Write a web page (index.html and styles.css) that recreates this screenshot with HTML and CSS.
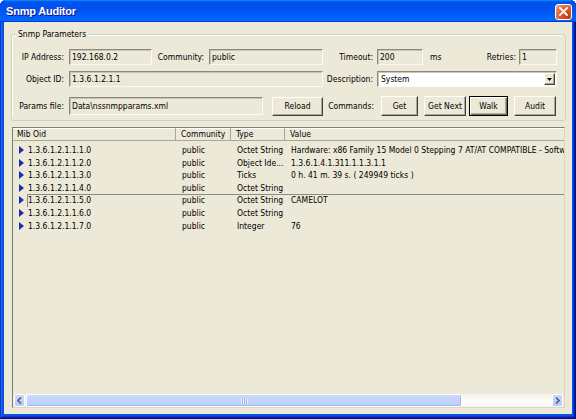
FILE: index.html
```html
<!DOCTYPE html>
<html>
<head>
<meta charset="utf-8">
<title>Snmp Auditor</title>
<link rel="stylesheet" href="styles.css">
</head>
<body>
<div class="window">
  <div class="titlebar">
    <span class="title">Snmp Auditor</span>
    <span class="close"><svg width="9" height="9" viewBox="0 0 9 9"><path d="M1 1 L8 8 M8 1 L1 8" stroke="#fff" stroke-width="1.8" stroke-linecap="square"/></svg></span>
  </div>
  <div class="client">
    <div class="group">
      <span class="legend">Snmp Parameters</span>
      <div class="frow">
        <span class="lbl w57">IP Address:</span>
        <div class="field f-ip">192.168.0.2</div>
        <span class="lbl w57">Community:</span>
        <div class="field f-comm">public</div>
        <span class="lbl w54">Timeout:</span>
        <div class="field f-time">200</div>
        <span class="unit">ms</span>
        <span class="lbl w76">Retries:</span>
        <div class="field f-ret">1</div>
      </div>
      <div class="frow r2">
        <span class="lbl w57">Object ID:</span>
        <div class="field f-oid">1.3.6.1.2.1.1</div>
        <span class="lbl w54">Description:</span>
        <div class="select">
          <span class="sel-text">System</span>
          <span class="dd"><svg width="5" height="3" viewBox="0 0 5 3"><path d="M0 0 H5 L2.5 3 Z" fill="#000"/></svg></span>
        </div>
      </div>
      <div class="frow r3">
        <span class="lbl w57">Params file:</span>
        <div class="field f-params">Data\nssnmpparams.xml</div>
        <button class="btn b-reload">Reload</button>
        <span class="lbl w57 cmd">Commands:</span>
        <button class="btn b-get">Get</button>
        <button class="btn b-next">Get Next</button>
        <button class="btn b-walk default">Walk</button>
        <button class="btn b-audit">Audit</button>
      </div>
    </div>

    <div class="list">
      <div class="hdr">
        <div class="hc c-oid">Mib Oid</div>
        <div class="hc c-comm">Community</div>
        <div class="hc c-type">Type</div>
        <div class="hc c-val">Value</div>
      </div>
      <div class="rows">
        <div class="row"><span class="mark"><svg width="5" height="8" viewBox="0 0 5 8"><path d="M0 0 L5 4 L0 8 Z" fill="#1a2fb0"/></svg></span><div class="sel"><span class="c c1">1.3.6.1.2.1.1.1.0</span><span class="c c2">public</span><span class="c c3">Octet String</span><span class="c c4">Hardware: x86 Family 15 Model 0 Stepping 7 AT/AT COMPATIBLE - Software: Windows 2000 Version 5.1</span></div></div>
        <div class="row"><span class="mark"><svg width="5" height="8" viewBox="0 0 5 8"><path d="M0 0 L5 4 L0 8 Z" fill="#1a2fb0"/></svg></span><div class="sel"><span class="c c1">1.3.6.1.2.1.1.2.0</span><span class="c c2">public</span><span class="c c3">Object Ide...</span><span class="c c4">1.3.6.1.4.1.311.1.1.3.1.1</span></div></div>
        <div class="row"><span class="mark"><svg width="5" height="8" viewBox="0 0 5 8"><path d="M0 0 L5 4 L0 8 Z" fill="#1a2fb0"/></svg></span><div class="sel"><span class="c c1">1.3.6.1.2.1.1.3.0</span><span class="c c2">public</span><span class="c c3">Ticks</span><span class="c c4">0 h. 41 m. 39 s. ( 249949 ticks )</span></div></div>
        <div class="row"><span class="mark"><svg width="5" height="8" viewBox="0 0 5 8"><path d="M0 0 L5 4 L0 8 Z" fill="#1a2fb0"/></svg></span><div class="sel"><span class="c c1">1.3.6.1.2.1.1.4.0</span><span class="c c2">public</span><span class="c c3">Octet String</span><span class="c c4"></span></div></div>
        <div class="row focus"><span class="mark"><svg width="5" height="8" viewBox="0 0 5 8"><path d="M0 0 L5 4 L0 8 Z" fill="#1a2fb0"/></svg></span><div class="sel"><span class="c c1">1.3.6.1.2.1.1.5.0</span><span class="c c2">public</span><span class="c c3">Octet String</span><span class="c c4">CAMELOT</span></div></div>
        <div class="row"><span class="mark"><svg width="5" height="8" viewBox="0 0 5 8"><path d="M0 0 L5 4 L0 8 Z" fill="#1a2fb0"/></svg></span><div class="sel"><span class="c c1">1.3.6.1.2.1.1.6.0</span><span class="c c2">public</span><span class="c c3">Octet String</span><span class="c c4"></span></div></div>
        <div class="row"><span class="mark"><svg width="5" height="8" viewBox="0 0 5 8"><path d="M0 0 L5 4 L0 8 Z" fill="#1a2fb0"/></svg></span><div class="sel"><span class="c c1">1.3.6.1.2.1.1.7.0</span><span class="c c2">public</span><span class="c c3">Integer</span><span class="c c4">76</span></div></div>
      </div>
      <div class="hscroll">
        <span class="sb-arrow"><svg width="5" height="7" viewBox="0 0 5 7"><path d="M4 0.5 L1 3.5 L4 6.5" fill="none" stroke="#4d6185" stroke-width="1.6"/></svg></span>
        <span class="sb-thumb"><span class="grip"></span></span>
        <span class="sb-track"></span>
        <span class="sb-arrow"><svg width="5" height="7" viewBox="0 0 5 7"><path d="M1 0.5 L4 3.5 L1 6.5" fill="none" stroke="#4d6185" stroke-width="1.6"/></svg></span>
      </div>
    </div>
  </div>
</div>
</body>
</html>
```
FILE: styles.css
```css
html, body {
  margin: 0;
  padding: 0;
  background: #ffffff;
}
body {
  font-family: "DejaVu Sans Condensed", "Liberation Sans", sans-serif;
  font-size: 8.5px;
  color: #000;
}
.window {
  width: 576px;
  height: 419px;
  box-sizing: border-box;
  display: flex;
  flex-direction: column;
  padding: 0 4px 5px 4px;
  background: #0855dd;
  box-shadow: inset -1px -1px #00138c, inset 1px 1px #0831d9, inset -2px -2px #001ea0, inset 2px 2px #166aee, inset -3px -3px #003bda, inset 3px 3px #0855dd;
  border-radius: 6px 6px 0 0;
  overflow: hidden;
}
.titlebar {
  flex: none;
  height: 22px;
  margin: 0 -4px;
  display: flex;
  align-items: center;
  justify-content: space-between;
  padding: 0 4px 0 6px;
  background: linear-gradient(to bottom, #0997ff 0%, #0053ee 8%, #0050ee 40%, #0066ff 88%, #0066ff 93%, #005bff 95%, #003dd7 96%, #003dd7 100%);
}
.title {
  font-family: "Liberation Sans", sans-serif;
  font-weight: bold;
  font-size: 11px;
  letter-spacing: -0.2px;
  color: #fff;
  text-shadow: 1px 1px #0f1089;
}
.close {
  width: 17px;
  height: 16px;
  box-sizing: border-box;
  border: 1px solid #fff;
  border-radius: 3px;
  display: flex;
  align-items: center;
  justify-content: center;
  background: radial-gradient(circle at 85% 85%, #c23c0c 0%, #dc5a2a 50%, #e77d55 75%, #f4b49a 100%);
  margin-top: 1px;
}
.client {
  flex: 1;
  display: flex;
  flex-direction: column;
  background: #ece9d8;
  min-height: 0;
}
.group {
  position: relative;
  margin: 12px 6px 0 7px;
  border: 1px solid #d0d0bf;
  border-radius: 3px;
  padding: 13px 0 4px 0;
  box-shadow: inset 1px 1px 0 #fff;
}
.legend {
  position: absolute;
  top: -6px;
  left: 4px;
  padding: 0 2px;
  line-height: 11px;
  background: #ece9d8;
}
.frow {
  display: flex;
  align-items: center;
  height: 18px;
}
.frow.r2 {
  margin-top: 4px;
}
.frow.r3 {
  margin-top: 8px;
  height: 20px;
}
.lbl {
  flex: none;
  box-sizing: border-box;
  text-align: right;
  padding-right: 5px;
  white-space: nowrap;
}
.w57 { width: 57px; }
.w54 { width: 54px; padding-right: 4px; }
.w76 { width: 76px; padding-right: 3px; }
.lbl.cmd { padding-right: 6px; }
.unit {
  flex: none;
  width: 20px;
  box-sizing: border-box;
  padding-left: 7px;
}
.field {
  flex: none;
  height: 16px;
  box-sizing: border-box;
  border: 1px solid;
  border-color: #8b897c #fbfaf6 #fbfaf6 #8b897c;
  box-shadow: inset 1px 1px 0 #c8c5b4;
  background: #ece9d8;
  padding-left: 2px;
  line-height: 14px;
  white-space: nowrap;
  overflow: hidden;
}
.f-ip { width: 83px; }
.f-comm { width: 114px; }
.f-time { width: 46px; }
.f-ret { width: 38px; }
.f-oid { width: 254px; }
.f-params { width: 194px; height: 18px; line-height: 16px; }
.select {
  flex: none;
  width: 180px;
  height: 16px;
  box-sizing: border-box;
  border: 1px solid;
  border-color: #8b897c #fbfaf6 #fbfaf6 #8b897c;
  box-shadow: inset 1px 1px 0 #c8c5b4;
  background: #fff;
  display: flex;
  align-items: center;
  justify-content: space-between;
  padding: 1px 1px 1px 3px;
}
.dd {
  width: 11px;
  height: 12px;
  box-sizing: border-box;
  border: 1px solid;
  border-color: #fff #404040 #404040 #fff;
  box-shadow: inset -1px -1px 0 #aca899;
  background: #ece9d8;
  display: flex;
  align-items: center;
  justify-content: center;
}
.btn {
  flex: none;
  height: 20px;
  box-sizing: border-box;
  padding: 0;
  margin: 0;
  font: inherit;
  color: #000;
  background: #ece9d8;
  border: 1px solid;
  border-color: #fff #404040 #404040 #fff;
  box-shadow: inset -1px -1px 0 #aca899;
  text-align: center;
  white-space: nowrap;
}
.btn.default {
  border: 1px solid #000;
  box-shadow: inset 1px 1px 0 #fff, inset -1px -1px 0 #716f64, inset -2px -2px 0 #aca899;
}
.b-reload { width: 51px; height: 19px; margin-left: 9px; }
.b-get { width: 37px; margin-left: 1px; }
.b-next { width: 42px; margin-left: 6px; }
.b-walk { width: 39px; margin-left: 3px; }
.b-audit { width: 42px; margin-left: 6px; }

.list {
  flex: 1;
  min-height: 0;
  margin: 6px 7px 6px 8px;
  border: 1px solid;
  border-color: #7f7d72 #d8d5c6 #d8d5c6 #7f7d72;
  background: #ece9d8;
  display: flex;
  flex-direction: column;
  overflow: hidden;
}
.hdr {
  flex: none;
  display: flex;
  height: 13px;
  box-sizing: border-box;
  border-bottom: 1px solid #aca899;
  box-shadow: inset 0 1px 0 #fff;
}
.hc {
  box-sizing: border-box;
  line-height: 12px;
  padding-left: 5px;
  border-right: 1px solid #aca899;
  white-space: nowrap;
}
.hc.c-oid { width: 163px; padding-left: 4px; }
.hc.c-comm { width: 55px; }
.hc.c-type { width: 54px; }
.hc.c-val { flex: 1; border-right: 0; }
.rows {
  flex: 1;
  padding-top: 3px;
  min-height: 0;
}
.row {
  display: flex;
  height: 12.55px;
  white-space: nowrap;
}
.mark {
  flex: none;
  width: 14px;
  box-sizing: border-box;
  padding-left: 6px;
  display: flex;
  align-items: center;
}
.sel {
  flex: 1;
  display: flex;
  align-items: center;
  min-width: 0;
}
.row.focus .sel {
  box-shadow: inset 1px 1px 0 #8a8a8a;
}
.c {
  flex: none;
  box-sizing: border-box;
  overflow: hidden;
  line-height: 12px;
}
.c1 { width: 149px; padding-left: 1px; }
.c2 { width: 55px; padding-left: 6px; }
.c3 { width: 54px; padding-left: 6px; }
.c4 { flex: 1; padding-left: 6px; }
.hscroll {
  flex: none;
  height: 13px;
  display: flex;
  padding: 0 1px;
  align-items: stretch;
}
.sb-arrow {
  flex: none;
  width: 11px;
  box-sizing: border-box;
  border: 1px solid #fff;
  border-radius: 2px;
  background: linear-gradient(to bottom, #c9d8fc, #b7cbf7);
  display: flex;
  align-items: center;
  justify-content: center;
}
.sb-thumb {
  flex: none;
  width: 436px;
  margin-left: 1px;
  box-sizing: border-box;
  border: 1px solid #fff;
  border-radius: 2px;
  background: linear-gradient(to bottom, #cbdafc, #b9cdf8);
  box-shadow: inset -1px -1px 0 #a5bbef;
  display: flex;
  align-items: center;
  justify-content: center;
}
.grip {
  width: 7px;
  height: 6px;
  background: repeating-linear-gradient(to right, #eef3fe 0 1px, #9fb3e3 1px 2px);
}
.sb-track {
  flex: 1;
  background: linear-gradient(to bottom, #f3f1ea, #fefefb 60%, #f7f6f1);
}
```
